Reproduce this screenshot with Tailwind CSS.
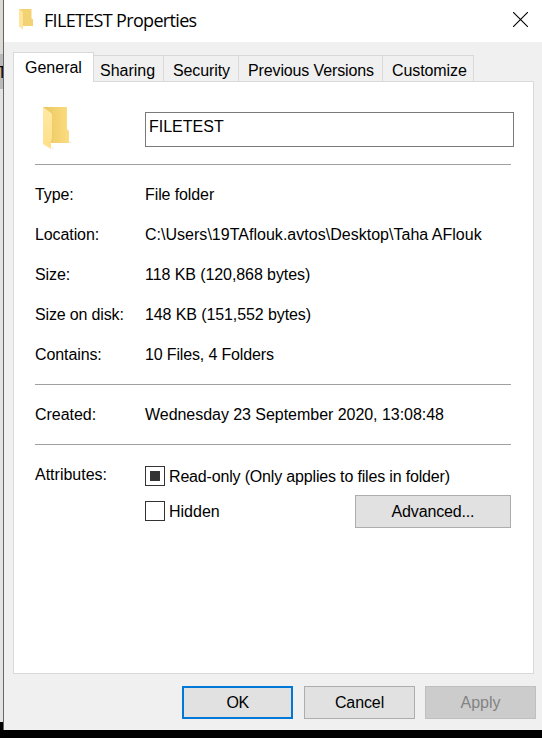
<!DOCTYPE html>
<html lang="en">
<head>
<meta charset="utf-8">
<title>FILETEST Properties</title>
<script src="https://cdn.jsdelivr.net/npm/@tailwindcss/browser@4"></script>
</head>
<body class="w-[542px] h-[738px] overflow-hidden bg-black text-black font-['Liberation_Sans',Arial,sans-serif] text-[16px] leading-5 whitespace-nowrap">
<div class="flex w-[542px] h-[730px]">
  <div class="w-[3px] h-[722px] shrink-0 overflow-hidden bg-[#e3e3e3] flex flex-col">
    <div class="h-[54px] bg-[#dcdad4] shrink-0"></div>
    <div class="h-[35px] bg-[#b9b9b9] shrink-0 flex items-center justify-end"><span class="-mr-[4px] mt-[3px]">T</span></div>
  </div>
  <main class="w-[539px] h-[730px] border-l border-[#666] bg-[#f0f0f0] flex flex-col">
    <header class="h-[42px] shrink-0 bg-white flex">
      <svg class="mt-[9px] ml-[15px] shrink-0" width="16" height="21" viewBox="0 0 16 21">
        <path d="M0 0H12.500V9.500L14 10.500V17H3Z" fill="#f3d273"/>
        <path d="M0 0L3.500 2.500Q4 3 4 4V20.500L0 17.500Z" fill="#ffe69c"/>
      </svg>
      <h1 class="ml-[9px] mt-[8px] text-[18px] leading-[24px] tracking-[-0.67px] font-['Open_Sans',sans-serif]">FILETEST Properties</h1>
      <svg class="ml-auto mt-3 mr-[14px]" width="15" height="15" viewBox="0 0 15 15" stroke="#000" stroke-width="1.100"><path d="M0 0L15 15M15 0L0 15"/></svg>
    </header>
    <nav class="h-[40px] shrink-0 pl-[9px] pt-[10px] flex items-start relative">
      <div class="w-[81px] h-[30px] bg-white border border-b-0 border-[#d9d9d9] pl-[11px] pt-[5px]">General</div>
      <div class="mt-[3px] w-[70px] h-[26px] border-t border-r border-[#d9d9d9] pl-[6px] pt-[5px]">Sharing</div>
      <div class="mt-[3px] w-[75px] h-[26px] border-t border-r border-[#d9d9d9] pl-[9px] pt-[5px] tracking-[-0.1px]">Security</div>
      <div class="mt-[3px] w-[144px] h-[26px] border-t border-r border-[#d9d9d9] pl-[9px] pt-[5px] tracking-[-0.13px]">Previous Versions</div>
      <div class="mt-[3px] w-[91px] h-[26px] border-t border-r border-[#d9d9d9] pl-[9px] pt-[5px] tracking-[-0.1px]">Customize</div>
    </nav>
    <section class="-mt-px ml-[9px] w-[521px] h-[593px] shrink-0 bg-white border border-[#d9d9d9] px-[21px] flex flex-col">
      <div class="flex h-[83px] shrink-0 border-b border-[#a0a0a0] w-[476px]">
        <svg class="ml-[8px] mt-[24px] shrink-0" width="30" height="45" viewBox="0 0 30 45">
          <defs><linearGradient id="back" x1="0" x2="1"><stop offset="0" stop-color="#e9c75e"/><stop offset="1" stop-color="#fbdc80"/></linearGradient>
          <linearGradient id="front" x1="0" x2="0" y1="0" y2="1"><stop stop-color="#ffe9a6"/><stop offset="1" stop-color="#ffdf87"/></linearGradient></defs>
          <path d="M8 43L11 41L10 43ZM25 37L28 35.500V37Z" fill="#e8e8e8"/>
          <path d="M0 1H24V23L26 25V37H4Z" fill="url(#back)"/>
          <path d="M0 1L8 7Q9 8 9 9V32Q8 34 8 36V43L0 38Z" fill="url(#front)"/>
        </svg>
        <div class="ml-[72px] mt-[30px] w-[369px] h-[35px] shrink-0 border border-[#7a7a7a] pl-[3px] pt-[4px]">FILETEST</div>
      </div>
      <dl class="grid grid-cols-[110px_1fr] gap-y-5 pt-5 h-[220px] shrink-0 w-[476px] border-b border-[#a0a0a0] content-start tracking-[-0.1px]">
        <dt>Type:</dt><dd>File folder</dd>
        <dt>Location:</dt><dd class="tracking-[0.02px]">C:\Users\19TAflouk.avtos\Desktop\Taha AFlouk</dd>
        <dt>Size:</dt><dd class="tracking-[-0.08px]">118 KB (120,868 bytes)</dd>
        <dt class="tracking-[-0.15px]">Size on disk:</dt><dd>148 KB (151,552 bytes)</dd>
        <dt>Contains:</dt><dd class="tracking-[-0.15px]">10 Files, 4 Folders</dd>
      </dl>
      <dl class="grid grid-cols-[110px_1fr] pt-5 h-[60px] shrink-0 w-[476px] border-b border-[#a0a0a0] tracking-[-0.04px]">
        <dt>Created:</dt><dd>Wednesday 23 September 2020, 13:08:48</dd>
      </dl>
      <div class="flex pt-5 w-[476px]">
        <div class="w-[110px] shrink-0">Attributes:</div>
        <div class="flex-1">
          <div class="flex items-center gap-1 mt-px h-5"><span class="size-5 border border-[#333] grid place-items-center"><span class="size-[10px] bg-[#333]"></span></span><span class="mt-px tracking-[-0.17px]">Read-only (Only applies to files in folder)</span></div>
          <div class="flex mt-[9px]">
            <div class="flex items-center gap-1 mt-[6px] h-5"><span class="size-5 border border-[#333]"></span><span class="mt-px">Hidden</span></div>
            <div class="ml-auto w-[156px] h-[33px] border border-[#adadad] bg-[#e1e1e1] flex items-center justify-center tracking-[-0.15px]">Advanced...</div>
          </div>
        </div>
      </div>
    </section>
    <footer class="flex justify-end gap-[10px] pt-3 pr-[6px]">
      <div class="w-[111px] h-[33px] border-2 border-[#0078d7] bg-[#e1e1e1] flex items-center justify-center tracking-[-0.5px]">OK</div>
      <div class="w-[111px] h-[33px] border border-[#adadad] bg-[#e1e1e1] flex items-center justify-center ml-px tracking-[-0.1px]">Cancel</div>
      <div class="w-[111px] h-[33px] border border-[#bfbfbf] bg-[#ccc] text-[#838383] flex items-center justify-center">Apply</div>
    </footer>
  </main>
</div>
</body>
</html>
